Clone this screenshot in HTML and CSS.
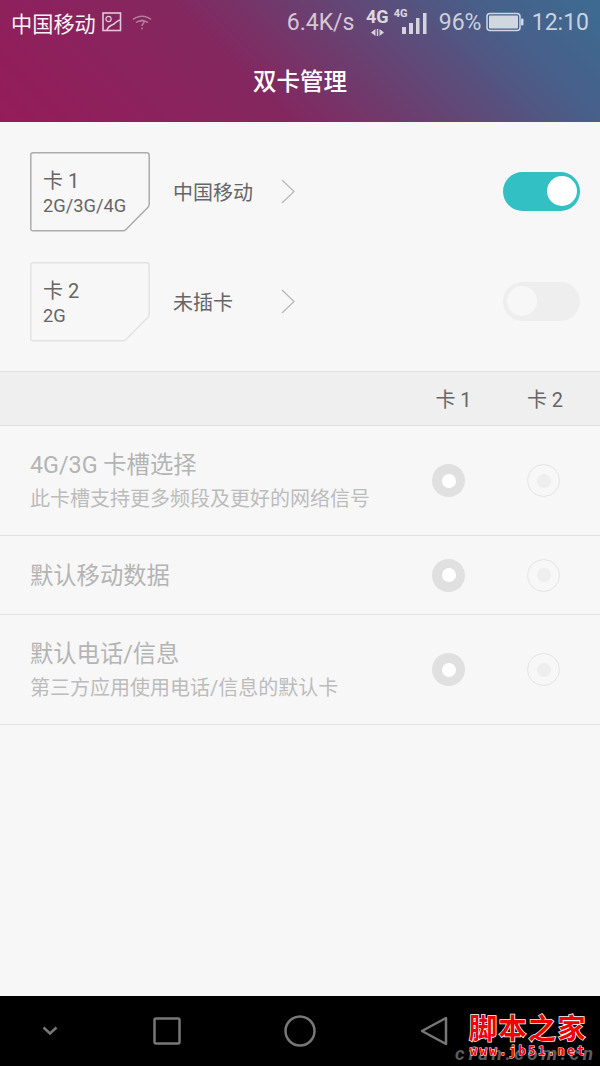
FILE: index.html
```html
<!DOCTYPE html>
<html lang="zh-CN">
<head>
  <meta charset="UTF-8">
  <meta name="viewport" content="width=device-width, initial-scale=1.0">
  <title>双卡管理</title>
  <link rel="stylesheet" href="styles.css">
</head>
<body>

<div class="phone">
  <header class="top-bar">
    <div class="status-bar">
      <div class="status-left">
        <span class="carrier">中国移动</span>
        <svg class="icon-picture" width="20" height="20" viewBox="0 0 20 20" fill="none" stroke="#fff" stroke-width="1.6">
          <rect x="1" y="1" width="17.5" height="17.5"/>
          <circle cx="6.5" cy="7" r="2.6" stroke-width="1.2"/>
          <path d="M5 18 C7 12 11 14 13 11 C14.500 9.500 16 8.500 18 8"/>
        </svg>
        <svg class="icon-wifi" width="20" height="16" viewBox="0 0 20 16" fill="none" stroke="#fff" stroke-width="1.5">
          <path d="M1 5.500 C6 1 14 1 19 5.500"/>
          <path d="M4 8.500 C7 6 13 6 16 8.500"/>
          <path d="M8 8 C8 5.500 12.500 5.800 12 8.500 C11.600 10 10 10 10 12"/>
          <path d="M10 13.500 V15.500"/>
        </svg>
      </div>
      <div class="status-right">
        <span class="speed">6.4K/s</span>
        <div class="net-main">
          <span class="net-label">4G</span>
          <svg width="15" height="7" viewBox="0 0 15 7" fill="#fff">
            <path d="M5.500 0 V7 L1 3.500 Z"/>
            <path d="M9.500 0 V7 L14 3.500 Z"/>
            <rect x="6.800" y="0" width="1.400" height="7"/>
          </svg>
        </div>
        <div class="net-signal">
          <span class="net-small">4G</span>
          <svg width="25" height="21" viewBox="0 0 25 21" fill="#fff">
            <rect x="0" y="14" width="4" height="7"/>
            <rect x="7" y="10" width="4" height="11"/>
            <rect x="14" y="5" width="3.500" height="16"/>
            <rect x="21" y="0" width="3.500" height="21"/>
          </svg>
        </div>
        <span class="battery-text">96%</span>
        <svg class="icon-battery" width="38" height="20" viewBox="0 0 38 20">
          <rect x="1" y="1.500" width="33" height="17" rx="3" fill="none" stroke="#fff" stroke-width="1.500"/>
          <rect x="3" y="3.500" width="29" height="13" rx="1" fill="#fff"/>
          <rect x="35" y="6.500" width="2.500" height="7" rx="1" fill="#fff"/>
        </svg>
        <span class="clock">12:10</span>
      </div>
    </div>
    <h1 class="page-title">双卡管理</h1>
  </header>

  <main class="content">
    <section class="sim-list">
      <div class="sim-row">
        <div class="sim-card">
          <svg class="sim-shape" width="120" height="80" viewBox="0 0 120 80" fill="none" stroke="#acacac" stroke-width="1.500">
            <path d="M3 .8 H116.500 Q119.200 .8 119.200 3.500 V52 Q119.200 54 118 55.200 L96 77.500 Q94.800 78.800 93 78.800 H3 Q.8 78.800 .8 76.500 V3 Q.8 .8 3 .8 Z"/>
          </svg>
          <div class="sim-text">
            <span class="sim-name">卡 1</span>
            <span class="sim-bands">2G/3G/4G</span>
          </div>
        </div>
        <span class="sim-carrier">中国移动</span>
        <svg class="chevron" width="15" height="25" viewBox="0 0 15 25" fill="none" stroke="#b8b8b8" stroke-width="1.200">
          <path d="M1 1 L13 12.500 L1 24"/>
        </svg>
        <div class="switch switch-on"><div class="knob"></div></div>
      </div>

      <div class="sim-row">
        <div class="sim-card">
          <svg class="sim-shape" width="120" height="80" viewBox="0 0 120 80" fill="none" stroke="#e3e3e3" stroke-width="1.500">
            <path d="M3 .8 H116.500 Q119.200 .8 119.200 3.500 V52 Q119.200 54 118 55.200 L96 77.500 Q94.800 78.800 93 78.800 H3 Q.8 78.800 .8 76.500 V3 Q.8 .8 3 .8 Z"/>
          </svg>
          <div class="sim-text">
            <span class="sim-name">卡 2</span>
            <span class="sim-bands">2G</span>
          </div>
        </div>
        <span class="sim-carrier">未插卡</span>
        <svg class="chevron" width="15" height="25" viewBox="0 0 15 25" fill="none" stroke="#b8b8b8" stroke-width="1.200">
          <path d="M1 1 L13 12.500 L1 24"/>
        </svg>
        <div class="switch switch-off"><div class="knob"></div></div>
      </div>
    </section>

    <div class="table-head">
      <span></span>
      <span class="head-cell">卡 1</span>
      <span class="head-cell">卡 2</span>
    </div>

    <div class="option-row option-tall">
      <div class="option-text">
        <div class="option-title">4G/3G 卡槽选择</div>
        <div class="option-sub">此卡槽支持更多频段及更好的网络信号</div>
      </div>
      <div class="radio radio-on"></div>
      <div class="radio radio-off"></div>
    </div>

    <div class="option-row option-short">
      <div class="option-text">
        <div class="option-title">默认移动数据</div>
      </div>
      <div class="radio radio-on"></div>
      <div class="radio radio-off"></div>
    </div>

    <div class="option-row option-tall">
      <div class="option-text">
        <div class="option-title">默认电话/信息</div>
        <div class="option-sub">第三方应用使用电话/信息的默认卡</div>
      </div>
      <div class="radio radio-on"></div>
      <div class="radio radio-off"></div>
    </div>
  </main>

  <nav class="nav-bar">
    <svg width="18" height="12" viewBox="0 0 18 12" fill="none" stroke="#777" stroke-width="2.500">
      <path d="M2.500 2.500 L9 8.500 L15.500 2.500"/>
    </svg>
    <svg width="28" height="28" viewBox="0 0 28 28" fill="none" stroke="#777" stroke-width="2.500">
      <rect x="1.500" y="1.500" width="25" height="25" rx="1.500"/>
    </svg>
    <svg width="32" height="32" viewBox="0 0 32 32" fill="none" stroke="#777" stroke-width="2.500">
      <circle cx="16" cy="16" r="14.500"/>
    </svg>
    <svg width="28" height="30" viewBox="0 0 28 30" fill="none" stroke="#777" stroke-width="2.500">
      <path d="M26 2 V28 L2 15 Z" stroke-linejoin="round"/>
    </svg>
  </nav>

  <!-- site watermark sits on top of the nav bar -->
  <div class="watermark">
    <div class="mark-back">cfan.com.cn</div>
    <div class="mark-name">脚本之家</div>
    <div class="mark-url">www.jb51.net</div>
  </div>
</div>

</body>
</html>
```

FILE: styles.css
```css
* {
  box-sizing: border-box;
}

body {
  margin: 0;
  padding: 0;
  background-color: #f7f7f7;
  font-family: "Roboto", "Noto Sans CJK SC", sans-serif;
}

.phone {
  position: relative;
  width: 600px;
  height: 1066px;
  display: flex;
  flex-direction: column;
  overflow: hidden;
}

/* Top bar */
.top-bar {
  height: 122px;
  flex: none;
  background: linear-gradient(225deg, #3d6b92 0%, #47608a 17%, #6b3f70 41.5%, #84275f 60%, #951c5b 100%);
  color: #fff;
}

.status-bar {
  height: 44px;
  display: flex;
  justify-content: space-between;
  align-items: center;
  padding: 0 11px;
}

.status-left,
.status-right {
  display: flex;
  align-items: center;
}

.carrier {
  font-size: 21.200px;
  width: 91px;
  opacity: 0.95;
}

.icon-picture {
  opacity: 0.75;
}

.icon-wifi {
  margin-left: 10px;
  opacity: 0.4;
}

.status-right {
  color: rgba(255, 255, 255, 0.72);
  font-size: 23px;
}

.status-right svg {
  display: block;
  opacity: 0.75;
}

.speed {
  width: 80px;
}

.net-main {
  width: 27px;
  display: flex;
  flex-direction: column;
  align-items: center;
  padding-right: 6px;
  color: rgba(255, 255, 255, 0.8);
}

.net-label {
  font-size: 18px;
  font-weight: 700;
  line-height: 18px;
  margin-bottom: 3px;
}

.net-signal {
  position: relative;
  width: 32px;
  padding-left: 8px;
  padding-top: 3px;
}

.net-small {
  position: absolute;
  left: 0;
  top: -1px;
  font-size: 11px;
  line-height: 10px;
  font-weight: 700;
  color: rgba(255, 255, 255, 0.8);
}

.battery-text {
  margin-left: 13px;
  width: 47px;
}

.clock {
  margin-left: 8px;
}

.page-title {
  margin: 0;
  padding-top: 21px;
  text-align: center;
  font-size: 23.500px;
  line-height: 34px;
  font-weight: 500;
  color: #fff;
}

/* SIM rows */
.content {
  flex: 1;
}

.sim-list {
  height: 249px;
  padding-top: 30px;
}

.sim-row {
  height: 80px;
  margin-bottom: 30px;
  padding: 0 20px 0 30px;
  display: flex;
  align-items: center;
}

.sim-card {
  display: grid;
  width: 120px;
  height: 80px;
}

.sim-shape,
.sim-text {
  grid-area: 1 / 1;
}

.sim-text {
  display: flex;
  flex-direction: column;
  padding: 16px 0 0 13px;
  color: #666;
}

.sim-name {
  font-size: 20px;
  line-height: 26px;
}

.sim-bands {
  font-size: 18.300px;
  line-height: 23px;
}

.sim-carrier {
  width: 108px;
  margin: 0 0 2px 23px;
  font-size: 20px;
  color: #666;
}

.chevron {
  margin-bottom: 1px;
}

.switch {
  margin: 0 0 2px auto;
  width: 77px;
  height: 39px;
  border-radius: 20px;
  display: flex;
  align-items: center;
  padding: 0 3px 0 4px;
}

.knob {
  width: 30px;
  height: 30px;
  border-radius: 50%;
}

.switch-on {
  justify-content: flex-end;
  background-color: #33c0c5;
}

.switch-on .knob {
  background-color: #fff;
}

.switch-off {
  background-color: #eeeeee;
}

.switch-off .knob {
  background-color: #f7f7f7;
}

/* Table */
.table-head,
.option-row {
  display: grid;
  grid-template-columns: 1fr 95px 95px;
  padding-right: 9px;
  align-items: center;
  justify-items: center;
}

.table-head {
  height: 55px;
  background-color: #efefef;
  border-top: 1px solid #dfdfdf;
  border-bottom: 1px solid #dfdfdf;
}

.head-cell {
  font-size: 20px;
  color: #666;
  padding-left: 10px;
}

.head-cell:last-child {
  padding-left: 3px;
}

.option-row {
  padding-left: 30px;
  border-bottom: 1px solid #e2e2e2;
}

.option-tall {
  height: 110px;
}

.option-short {
  height: 79px;
}

.option-text {
  justify-self: start;
  padding-top: 3px;
}

.option-short .option-text {
  padding-top: 1px;
}

.option-title {
  font-size: 23.300px;
  line-height: 32px;
  color: #b4b4b4;
}

.option-sub {
  margin-top: 2px;
  font-size: 20px;
  line-height: 32px;
  color: #bcbcbc;
}

.radio {
  width: 33px;
  height: 33px;
  border-radius: 50%;
  display: flex;
  align-items: center;
  justify-content: center;
}

.radio::after {
  content: "";
  width: 14px;
  height: 14px;
  border-radius: 50%;
}

.radio-on {
  background-color: #e0e0e0;
}

.radio-on::after {
  background-color: #fff;
}

.radio-off {
  border: 1px solid #e4e4e4;
}

.radio-off::after {
  background-color: #eeeeee;
}

/* Bottom nav */
.nav-bar {
  height: 70px;
  flex: none;
  background-color: #000;
  display: grid;
  grid-template-columns: 100px 133px 134px 133px;
  align-items: center;
  justify-items: center;
}

/* Watermark */
.watermark {
  position: absolute;
  left: 455px;
  top: 1012px;
  width: 140px;
  height: 50px;
}

.mark-name {
  position: absolute;
  left: 14px;
  top: 2px;
  font-size: 28px;
  line-height: 32px;
  font-weight: 700;
  letter-spacing: 1.500px;
  color: #f00000;
  -webkit-text-stroke: 1.500px #fff;
  paint-order: stroke fill;
  white-space: nowrap;
}

.mark-url {
  position: absolute;
  left: 15px;
  top: 34px;
  font-family: "DejaVu Sans Mono", monospace;
  font-size: 12px;
  line-height: 10px;
  font-weight: 700;
  letter-spacing: 2.500px;
  color: #f00000;
  -webkit-text-stroke: 1px #fff;
  paint-order: stroke fill;
  white-space: nowrap;
}

.mark-back {
  position: absolute;
  left: 0;
  top: 34px;
  font-size: 19px;
  line-height: 16px;
  font-weight: 700;
  font-style: italic;
  letter-spacing: 3.500px;
  color: #5c5c5c;
  white-space: nowrap;
}
```
